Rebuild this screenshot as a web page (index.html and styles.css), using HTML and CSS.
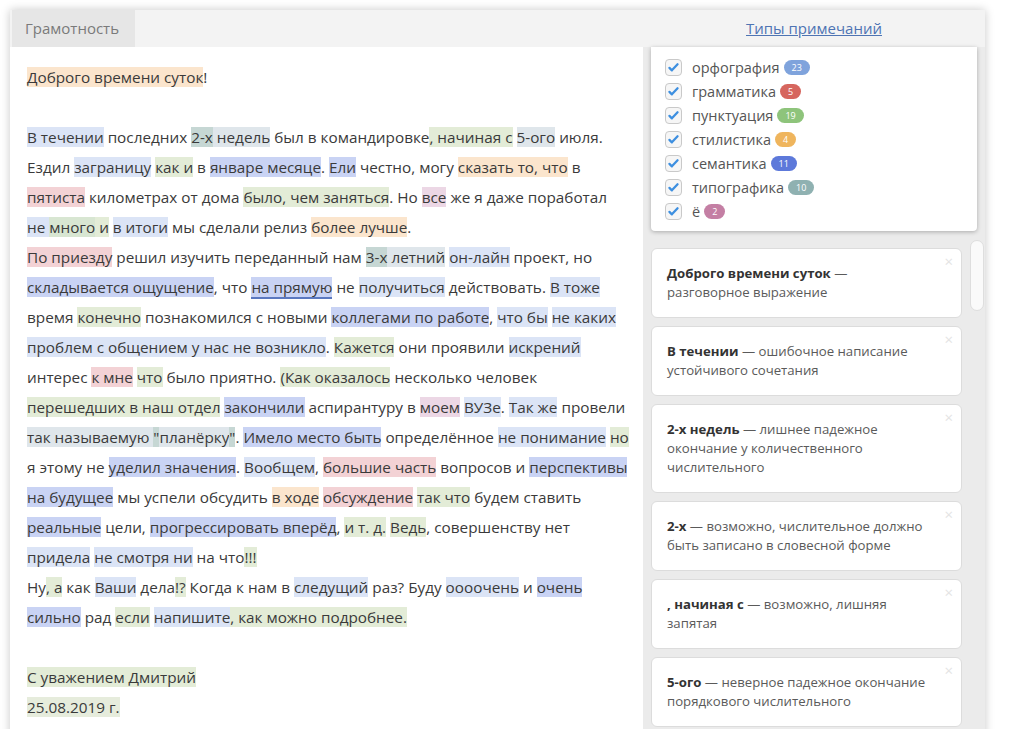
FILE: index.html
```html
<!DOCTYPE html>
<html lang="ru">
  <head>
    <meta charset="UTF-8" />
    <title>Грамотность</title>
    <link rel="stylesheet" href="styles.css">
  </head>
  <body>
    <div class="app">
      <div class="topbar">
        <div class="tab">Грамотность</div>
        <div class="spacer"></div>
        <div class="types"><a href="#">Типы примечаний</a></div>
      </div>

      <div class="main">
        <div class="text">
          <span class="st">Доброго времени суток</span>!<br>
          <br>
          <span class="or">В течении</span> последних <span class="tyl"><span class="ty">2-х</span> недель</span> был в командировке<span class="pu">, начиная с</span> <span class="tyl">5-ого</span> июля.<br>
          Ездил <span class="or">заграницу</span> <span class="pu">как и</span> в <span class="se">январе месяце</span>. <span class="se">Ели</span> честно, могу <span class="st">сказать то, что</span> в<br>
          <span class="gr">пятиста</span> километрах от дома <span class="pu">было, чем заняться</span>. Но <span class="yo">все</span> же я даже поработал<br>
          <span class="or">не </span><span class="pud">много</span><span class="pu"> и</span> <span class="or">в итоги</span> мы сделали релиз <span class="st">более лучше</span>.<br>
          <span class="gr">По приезду</span> решил изучить переданный нам <span class="tyl"><span class="ty">3-х</span> летний</span> <span class="or">он-лайн</span> проект, но<br>
          <span class="se">складывается ощущение</span>, что <span class="se active">на прямую</span> не <span class="or">получиться</span> действовать. <span class="or">В тоже</span><br>
          время <span class="pu">конечно</span> познакомился с новыми <span class="se">коллегами по работе</span>, <span class="or">что бы</span> <span class="or">не каких</span><br>
          <span class="or">проблем с общением у нас не возникло</span>. <span class="pu">Кажется</span> они проявили <span class="or">искрений</span><br>
          интерес <span class="gr">к мне</span> <span class="pu">что</span> было приятно. <span class="pu">(Как оказалось</span> несколько человек<br>
          <span class="pu">перешедших в наш отдел</span> <span class="se">закончили</span> аспирантуру в <span class="yo">моем</span> <span class="or">ВУЗе</span>. <span class="or">Так же</span> провели<br>
          <span class="tyl">так называемую <span class="ty">"</span>планёрку<span class="ty">"</span></span>. <span class="se">Имело место быть</span> определённое <span class="or">не понимание</span> <span class="pu">но</span><br>
          я этому не <span class="se">уделил значения</span>. <span class="or">Вообщем</span>, <span class="gr">большие часть</span> вопросов и <span class="se">перспективы</span><br>
          <span class="se">на будущее</span> мы успели обсудить <span class="st">в ходе</span> <span class="gr">обсуждение</span> <span class="pu">так что</span> будем ставить<br>
          <span class="se">реальные</span> цели, <span class="se">прогрессировать вперёд</span>, <span class="pu">и т. д.</span> <span class="pu">Ведь</span>, совершенству нет<br>
          <span class="or">придела</span> <span class="or">не смотря ни</span> на что<span class="pu">!!!</span><br>
          Ну<span class="pu">, а</span> как <span class="or">Ваши</span> дела<span class="pu">!?</span> Когда к нам в <span class="or">следущий</span> раз? Буду <span class="or">оооочень</span> и <span class="se">очень</span><br>
          <span class="se">сильно</span> рад <span class="pu">если</span> <span class="or">напишите</span><span class="pu">, как можно подробнее.</span><br>
          <br>
          <span class="pu">С уважением Дмитрий</span><br>
          <span class="pul">25.08.2019 г.</span>
        </div>

        <div class="side">
          <div class="filters">
            <label class="filter"><span class="check"></span>орфография <span class="badge b-or">23</span></label>
            <label class="filter"><span class="check"></span>грамматика <span class="badge b-gr">5</span></label>
            <label class="filter"><span class="check"></span>пунктуация <span class="badge b-pu">19</span></label>
            <label class="filter"><span class="check"></span>стилистика <span class="badge b-st">4</span></label>
            <label class="filter"><span class="check"></span>семантика <span class="badge b-se">11</span></label>
            <label class="filter"><span class="check"></span>типографика <span class="badge b-ty">10</span></label>
            <label class="filter"><span class="check"></span>ё <span class="badge b-yo">2</span></label>
          </div>

          <div class="notes">
            <div class="cards">
              <div class="card">
                <div class="note"><b>Доброго времени суток</b> —<br>разговорное выражение</div>
                <span class="close">×</span>
              </div>
              <div class="card">
                <div class="note"><b>В течении</b> — ошибочное написание<br>устойчивого сочетания</div>
                <span class="close">×</span>
              </div>
              <div class="card">
                <div class="note"><b>2-х недель</b> — лишнее падежное<br>окончание у количественного<br>числительного</div>
                <span class="close">×</span>
              </div>
              <div class="card">
                <div class="note"><b>2-х</b> — возможно, числительное должно<br>быть записано в словесной форме</div>
                <span class="close">×</span>
              </div>
              <div class="card">
                <div class="note"><b>, начиная с</b> — возможно, лишняя<br>запятая</div>
                <span class="close">×</span>
              </div>
              <div class="card">
                <div class="note"><b>5-ого</b> — неверное падежное окончание<br>порядкового числительного</div>
                <span class="close">×</span>
              </div>
            </div>
            <div class="scrollbar"><div class="thumb"></div></div>
          </div>
        </div>
      </div>
    </div>
  </body>
</html>
```

FILE: styles.css
```css
* {
  box-sizing: border-box;
}

body {
  margin: 0;
  background: #fff;
  font-family: "Open Sans", "Noto Sans", sans-serif;
  color: #3a3a3a;
  overflow: hidden;
}

.app {
  margin: 10px 0 0 10px;
  width: 975px;
  height: 760px;
  background: #fff;
  box-shadow: 0 0 9px rgba(0, 0, 0, 0.22);
}

/* header */
.topbar {
  display: flex;
  height: 37px;
  background: #f3f3f3;
}

.tab {
  width: 123px;
  margin-left: 2px;
  padding-left: 13px;
  background: #e6e6e6;
  color: #7a7a7a;
  font-size: 15px;
  line-height: 37px;
}

.spacer {
  flex: 1;
}

.types {
  width: 342px;
  text-align: center;
  font-size: 15px;
  line-height: 37px;
}

.types a {
  color: #4e74b3;
}

.main {
  display: flex;
  height: 723px;
}

/* text with marks */
.text {
  width: 633px;
  padding: 15px 17px;
  font-size: 15.3px;
  line-height: 30px;
  white-space: nowrap;
}

.st { background: #fbe5cd; }
.or { background: #dbe4f6; }
.gr { background: #f3d2d5; }
.pu { background: #e3ecd7; }
.pud { background: #d8e6d2; }
.pul { background: #e6ecdc; }
.se { background: #c9d3f4; }
.ty { background: #c6d7d4; }
.tyl { background: #dfe6eb; }
.yo { background: #ecd7e5; }

.active {
  border-bottom: 2px solid #5a78c0;
}

/* right column */
.side {
  width: 342px;
  background: #ebebeb;
}

.filters {
  margin: 0 8px;
  padding: 8px 14px;
  background: #fff;
  border-radius: 0 0 4px 4px;
  box-shadow: 0 1px 4px rgba(0, 0, 0, 0.28);
}

.filter {
  display: flex;
  align-items: center;
  height: 24px;
  font-size: 14.5px;
  color: #555;
}

.check {
  width: 17px;
  height: 17px;
  margin-right: 10px;
  border: 1px solid #c9c9c9;
  border-radius: 4px;
  background: #f6f6f6 url("data:image/svg+xml,%3Csvg xmlns='http://www.w3.org/2000/svg' viewBox='0 0 16 16'%3E%3Cpath d='M3 8.5l3 3 7-7.5' fill='none' stroke='%233d8fe0' stroke-width='2.8' stroke-linecap='round' stroke-linejoin='round'/%3E%3C/svg%3E") center / 13px no-repeat;
}

.badge {
  margin-left: 4px;
  padding: 0 8px;
  height: 15px;
  line-height: 15px;
  border-radius: 8px;
  font-size: 9px;
  color: #fff;
}

.b-or { background: #7fa3dc; }
.b-gr { background: #d6665e; }
.b-pu { background: #8ec47b; }
.b-st { background: #efb55d; }
.b-se { background: #5d79da; }
.b-ty { background: #8fb1b1; }
.b-yo { background: #c47fa4; }

.notes {
  display: flex;
  padding: 17px 0 0 8px;
}

.cards {
  width: 311px;
}

.card {
  display: flex;
  align-items: flex-start;
  margin-bottom: 8px;
  padding: 15px 8px 15px 15px;
  background: #fff;
  border: 1px solid #dcdcdc;
  border-radius: 6px;
  font-size: 13.2px;
  line-height: 19px;
  color: #5a5a5a;
  white-space: nowrap;
}

.note {
  flex: 1;
  padding-right: 12px;
}

.note b {
  color: #333;
}

.close {
  margin-top: -10px;
  font-size: 15px;
  line-height: 15px;
  color: #e4e4e4;
}

.scrollbar {
  margin: -8px 0 0 8px;
}

.thumb {
  width: 14px;
  height: 71px;
  background: #fafafa;
  border: 1px solid #dedede;
  border-radius: 7px;
}
```
